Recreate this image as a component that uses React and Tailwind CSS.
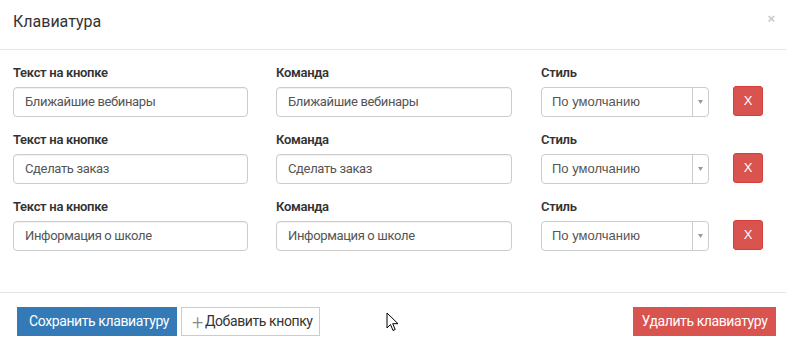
import React from 'react';

const rows = [
  { text: 'Ближайшие вебинары', cmd: 'Ближайшие вебинары' },
  { text: 'Сделать заказ', cmd: 'Сделать заказ' },
  { text: 'Информация о школе', cmd: 'Информация о школе' },
];

function Field({ label, value, width }) {
  return (
    <div className={`flex flex-col ${width}`}>
      <div className="h-[16px] text-[13px] leading-[16px] font-semibold tracking-[-0.3px] text-[#333] mb-[6px]">{label}</div>
      <div className="h-[30px] border border-[#ccc] rounded-[4px] flex items-center px-[11px] text-[13px] tracking-[-0.35px] text-[#555] shadow-[inset_0_1px_1px_rgba(0,0,0,0.06)]">
        {value}
      </div>
    </div>
  );
}

export default function App() {
  return (
    <div className="relative w-[786px] h-[351px] bg-white font-[family-name:Roboto,sans-serif] text-[#333] overflow-hidden">
      {/* header */}
      <div className="h-[50px] border-b border-[#e5e5e5] flex items-start justify-between pl-[13px] pr-[11px]">
        <h4 className="pt-[12px] text-[16px] leading-[20px] text-[#333]">Клавиатура</h4>
        <span className="pt-[11px] text-[13px] leading-[16px] font-bold text-[#c8c8c8] font-[family-name:Liberation_Sans,sans-serif]">×</span>
      </div>

      {/* body */}
      <div className="pt-[15px] pb-[41px] pl-[13px] flex flex-col gap-[15px]">
        {rows.map((r, i) => (
          <div key={i} className="flex items-end">
            <Field label="Текст на кнопке" value={r.text} width="w-[235px]" />
            <div className="w-[28px]" />
            <Field label="Команда" value={r.cmd} width="w-[236px]" />
            <div className="w-[29px]" />
            <div className="flex flex-col w-[168px]">
              <div className="h-[16px] text-[13px] leading-[16px] font-semibold tracking-[-0.3px] text-[#333] mb-[6px]">Стиль</div>
              <div className="h-[30px] border border-[#ccc] rounded-[4px] flex items-stretch text-[13px] text-[#555] font-[family-name:Liberation_Sans,sans-serif]">
                <div className="flex-1 flex items-center pl-[10px]">По умолчанию</div>
                <div className="w-[16px] border-l border-[#ccc] flex items-center justify-center">
                  <svg width="5" height="4" viewBox="0 0 5 4"><path d="M0 0h5L2.5 4z" fill="#999" /></svg>
                </div>
              </div>
            </div>
            <div className="w-[24px]" />
            <button className="w-[30px] h-[30px] mb-[1px] rounded-[3px] bg-[#d9534f] border border-[#d43f3a] text-white text-[13px] font-[family-name:Liberation_Sans,sans-serif] flex items-center justify-center">
              X
            </button>
          </div>
        ))}
      </div>

      {/* footer */}
      <div className="border-t border-[#e5e5e5] pt-[14px] pl-[17px] pr-[10px] flex items-start text-[14px] tracking-[-0.4px]">
        <button className="w-[160px] h-[29px] bg-[#337ab7] text-white flex items-center pl-[12px]">
          Сохранить клавиатуру
        </button>
        <button className="ml-[4px] w-[139px] h-[29px] bg-white border border-[#ccc] text-[#333] flex items-center pl-[10px] gap-[2px]">
          <span className="text-[20px] leading-[18px] text-[#888] font-light">+</span>Добавить кнопку
        </button>
        <div className="flex-1" />
        <button className="w-[143px] h-[29px] bg-[#d9534f] text-white flex items-center justify-center">
          Удалить клавиатуру
        </button>
      </div>

      {/* mouse cursor */}
      <svg className="absolute left-[386px] top-[312px]" width="13" height="20" viewBox="0 0 13 20">
        <path d="M1 1v15l3.5-3.5 2.5 6 2.2-1-2.5-5.8H12z" fill="#fff" stroke="#000" strokeWidth="1" strokeLinejoin="round" />
      </svg>
    </div>
  );
}
